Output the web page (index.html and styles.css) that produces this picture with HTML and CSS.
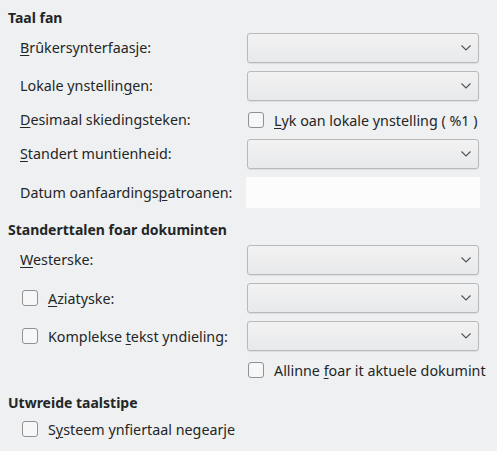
FILE: index.html
```html
<!DOCTYPE html>
<html lang="fy">
<head>
<meta charset="utf-8">
<title>Taal fan</title>
<link rel="stylesheet" href="styles.css">
</head>
<body>
<div class="page">
  <section class="section">
    <h2 class="heading">Taal fan</h2>
    <div class="grid">
      <div class="label"><u>B</u>rûkersynterfaasje:</div>
      <div class="combo"><svg class="chev" width="10" height="6" viewBox="0 0 10 6"><path d="M0.5 0.5 L5 5 L9.5 0.5" /></svg></div>

      <div class="label">Lokale ynstellin<u>g</u>en:</div>
      <div class="combo"><svg class="chev" width="10" height="6" viewBox="0 0 10 6"><path d="M0.5 0.5 L5 5 L9.5 0.5" /></svg></div>

      <div class="label short"><u>D</u>esimaal skiedingsteken:</div>
      <label class="check short"><span class="box"></span><span><u>L</u>yk oan lokale ynstelling ( %1 )</span></label>

      <div class="label"><u>S</u>tandert muntienheid:</div>
      <div class="combo"><svg class="chev" width="10" height="6" viewBox="0 0 10 6"><path d="M0.5 0.5 L5 5 L9.5 0.5" /></svg></div>

      <div class="label">Datum oanfaardings<u>p</u>atroanen:</div>
      <div class="field"></div>
    </div>
  </section>

  <section class="section">
    <h2 class="heading">Standerttalen foar dokuminten</h2>
    <div class="grid">
      <div class="label"><u>W</u>esterske:</div>
      <div class="combo"><svg class="chev" width="10" height="6" viewBox="0 0 10 6"><path d="M0.5 0.5 L5 5 L9.5 0.5" /></svg></div>

      <label class="check left"><span class="box"></span><span><u>A</u>ziatyske:</span></label>
      <div class="combo"><svg class="chev" width="10" height="6" viewBox="0 0 10 6"><path d="M0.5 0.5 L5 5 L9.5 0.5" /></svg></div>

      <label class="check left"><span class="box"></span><span>Komplekse <u>t</u>ekst yndieling:</span></label>
      <div class="combo"><svg class="chev" width="10" height="6" viewBox="0 0 10 6"><path d="M0.5 0.5 L5 5 L9.5 0.5" /></svg></div>

      <div class="label short"></div>
      <label class="check short"><span class="box"></span><span>Allinne <u>f</u>oar it aktuele dokumint</span></label>
    </div>
  </section>

  <section class="section">
    <h2 class="heading">Utwreide taalstipe</h2>
    <div class="single">
      <label class="check left"><span class="box"></span><span>S<u>y</u>steem ynfiertaal negearje</span></label>
    </div>
  </section>
</div>
</body>
</html>
```

FILE: styles.css
```css
html, body {
  margin: 0;
  padding: 0;
  background: #eff0f1;
}

body {
  font-family: "Noto Sans", "DejaVu Sans", sans-serif;
  font-size: 14.3px;
  color: #232627;
}

.page {
  padding: 9px 8px 0 8px;
  display: flex;
  flex-direction: column;
  gap: 13px;
}

.section {
  display: flex;
  flex-direction: column;
  gap: 6px;
}

.heading {
  margin: 0;
  font-size: 14px;
  font-weight: bold;
  line-height: 18px;
}

.grid {
  display: grid;
  grid-template-columns: 215px 232px;
  column-gap: 12px;
  row-gap: 8px;
  padding-left: 12px;
  align-items: center;
}

.single {
  padding-left: 12px;
}

.label {
  height: 30px;
  line-height: 30px;
  white-space: nowrap;
}

.label.short {
  height: 22px;
  line-height: 22px;
}

u {
  text-decoration: underline;
  text-decoration-thickness: 1px;
  text-underline-offset: 2px;
}

.combo {
  height: 28px;
  border: 1px solid #b7b9bb;
  border-radius: 3px;
  background: linear-gradient(#f2f2f3, #e8e9ea);
  box-shadow: 0 1px 1px rgba(0, 0, 0, 0.08);
  display: flex;
  align-items: center;
  justify-content: flex-end;
  padding-right: 7px;
}

.chev {
  display: block;
}

.chev path {
  fill: none;
  stroke: #4f5254;
  stroke-width: 1.1;
}

.field {
  height: 31px;
  margin-left: -1px;
  width: 234px;
  background: #fcfcfc;
}

.check {
  display: flex;
  align-items: center;
  gap: 10px;
  height: 22px;
  white-space: nowrap;
}

.check.short {
  padding-left: 1px;
}

.check.left {
  padding-left: 2px;
  height: 30px;
}

.single .check.left {
  height: 22px;
}

.box {
  width: 14px;
  height: 14px;
  border: 1px solid #8f9193;
  border-radius: 3px;
  background: #f7f7f7;
  flex: none;
}
```
